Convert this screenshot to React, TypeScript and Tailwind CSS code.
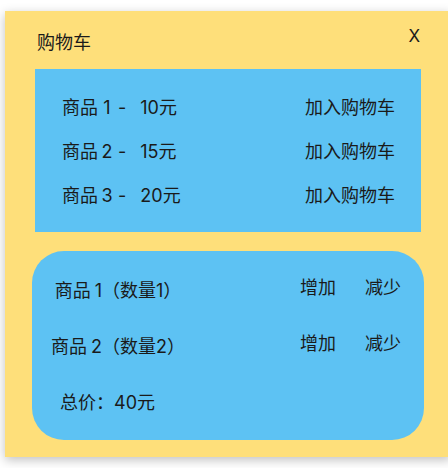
import React from "react";

const font = { fontFamily: 'Inter, "Noto Sans CJK SC", sans-serif' };

const products = [
  { idx: 1, price: 10 },
  { idx: 2, price: 15 },
  { idx: 3, price: 20 },
];

const cart = [
  { idx: 1, qty: 1 },
  { idx: 2, qty: 2 },
];

export default function App() {
  return (
    <div className="w-[448px] h-[468px] overflow-hidden bg-white text-[#1a1a1a]" style={font}>
      <div className="ml-[5px] mt-[11px] w-[446px] h-[446px] bg-[#fedf7a] shadow-[0_3px_10px_rgba(0,0,0,0.25)] flex flex-col">
        <div className="flex justify-between h-[58px] pl-[32px] pr-[31px]">
          <div className="text-[18px] leading-none pt-[23px]">购物车</div>
          <div className="text-[17px] leading-none pt-[17px]">X</div>
        </div>
        <div className="ml-[30px] w-[386px] h-[163px] bg-[#5dc2f3] pt-[16px] flex flex-col">
          {products.map((p) => (
            <div key={p.idx} className="h-[44px] flex items-center justify-between pl-[27px] pr-[26px] text-[18px]">
              <div className="flex items-baseline">
                <span>商品</span>
                <span className="ml-[3px] w-[12px] text-center">{p.idx}</span>
                <span className="ml-[5px]">-</span>
                <span className="ml-[14px]">{p.price}元</span>
              </div>
              <div>加入购物车</div>
            </div>
          ))}
        </div>
        <div className="ml-[27px] mt-[19px] w-[392px] h-[189px] bg-[#5dc2f3] rounded-[32px] pt-[11px] flex flex-col">
          {cart.map((c) => (
            <div key={c.idx} className="h-[56px] flex items-center justify-between pr-[23px] text-[18px]">
              <div className="flex items-baseline">
                <span className="w-[70px] text-right">
                  商品<span className="ml-[4px]">{c.idx}</span>
                </span>
                <span>（数量{c.qty}）</span>
              </div>
              <div className="flex gap-[29px] pb-[6px]">
                <span>增加</span>
                <span>减少</span>
              </div>
            </div>
          ))}
          <div className="h-[56px] flex items-center pl-[28px] text-[18px]">总价：40元</div>
        </div>
      </div>
    </div>
  );
}
